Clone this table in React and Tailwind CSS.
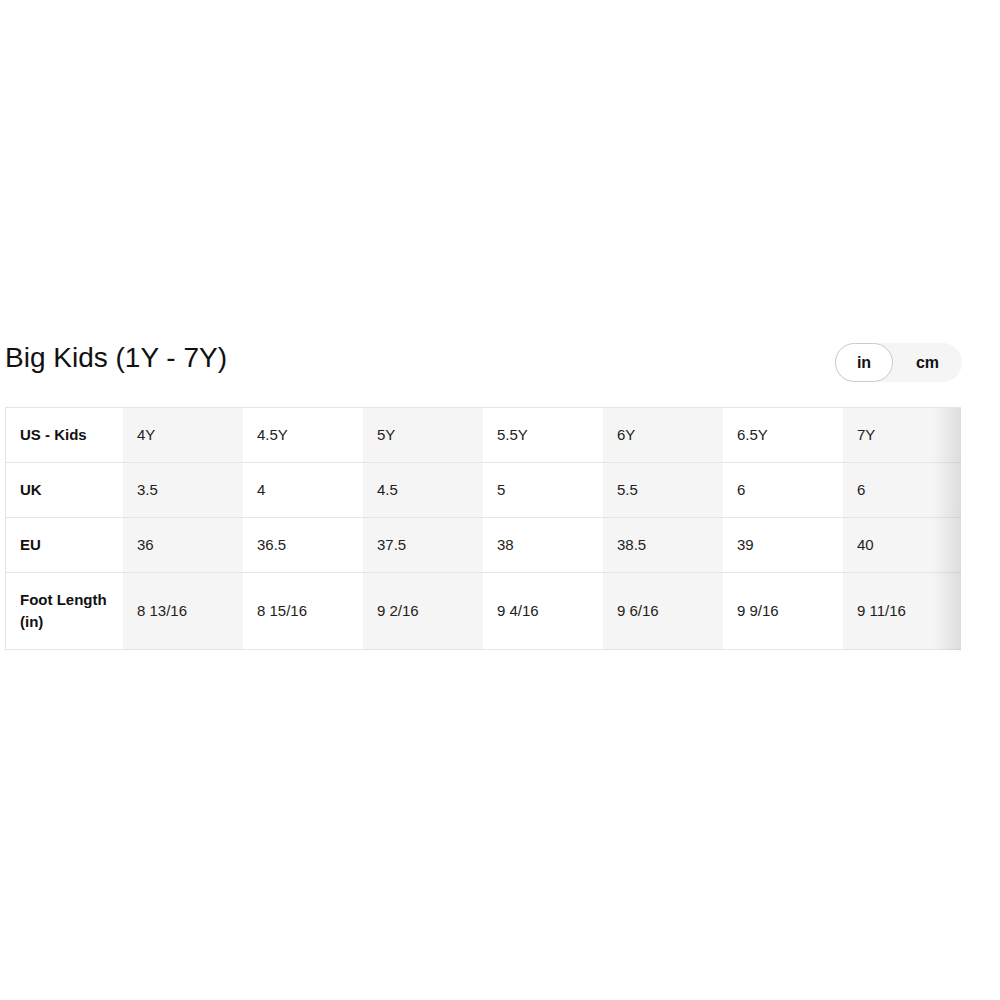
import React from 'react'

const sizes = [
  { us: '4Y', uk: '3.5', eu: '36', foot: '8 13/16' },
  { us: '4.5Y', uk: '4', eu: '36.5', foot: '8 15/16' },
  { us: '5Y', uk: '4.5', eu: '37.5', foot: '9 2/16' },
  { us: '5.5Y', uk: '5', eu: '38', foot: '9 4/16' },
  { us: '6Y', uk: '5.5', eu: '38.5', foot: '9 6/16' },
  { us: '6.5Y', uk: '6', eu: '39', foot: '9 9/16' },
  { us: '7Y', uk: '6', eu: '40', foot: '9 11/16' },
]

const rows = [
  { label: 'US - Kids', key: 'us' },
  { label: 'UK', key: 'uk' },
  { label: 'EU', key: 'eu' },
  { label: 'Foot Length (in)', key: 'foot' },
]

export default function App() {
  return (
    <div className="min-h-screen bg-white pt-[340px] pl-[5px] text-[#111]" style={{ fontFamily: '"Liberation Sans", Arial, sans-serif' }}>
      <div className="flex w-[957px] items-start justify-between">
        <h2 className="text-[28px] leading-[36px]">Big Kids (1Y - 7Y)</h2>
        <div className="mt-[3px] flex h-[39px] w-[127px] items-center rounded-full bg-[#f5f5f5]">
          <button className="h-[39px] w-[58px] rounded-full border border-[#cacaca] bg-white text-[16px] font-semibold">in</button>
          <button className="flex-1 text-[16px] font-semibold">cm</button>
        </div>
      </div>

      <div className="relative mt-[25px] w-[956px] overflow-hidden border-t border-l border-[#e5e5e5]">
        <table className="border-collapse text-[15px] leading-[22px]">
          <tbody>
            {rows.map((r) => (
              <tr key={r.key} className="border-b border-[#e5e5e5]">
                <td className="w-[117px] min-w-[117px] px-[14px] py-4 align-middle font-semibold">
                  {r.key === 'foot' ? (<span>Foot Length<br />(in)</span>) : r.label}
                </td>
                {sizes.map((s, i) => (
                  <td
                    key={i}
                    className={`w-[120px] min-w-[120px] px-[14px] align-middle text-[#222] ${i % 2 === 0 ? 'bg-[#f5f5f5]' : 'bg-white'}`}
                  >
                    {s[r.key]}
                  </td>
                ))}
              </tr>
            ))}
          </tbody>
        </table>
        <div className="pointer-events-none absolute top-0 right-0 bottom-0 w-[28px] bg-gradient-to-r from-transparent to-black/10" />
      </div>
    </div>
  )
}
